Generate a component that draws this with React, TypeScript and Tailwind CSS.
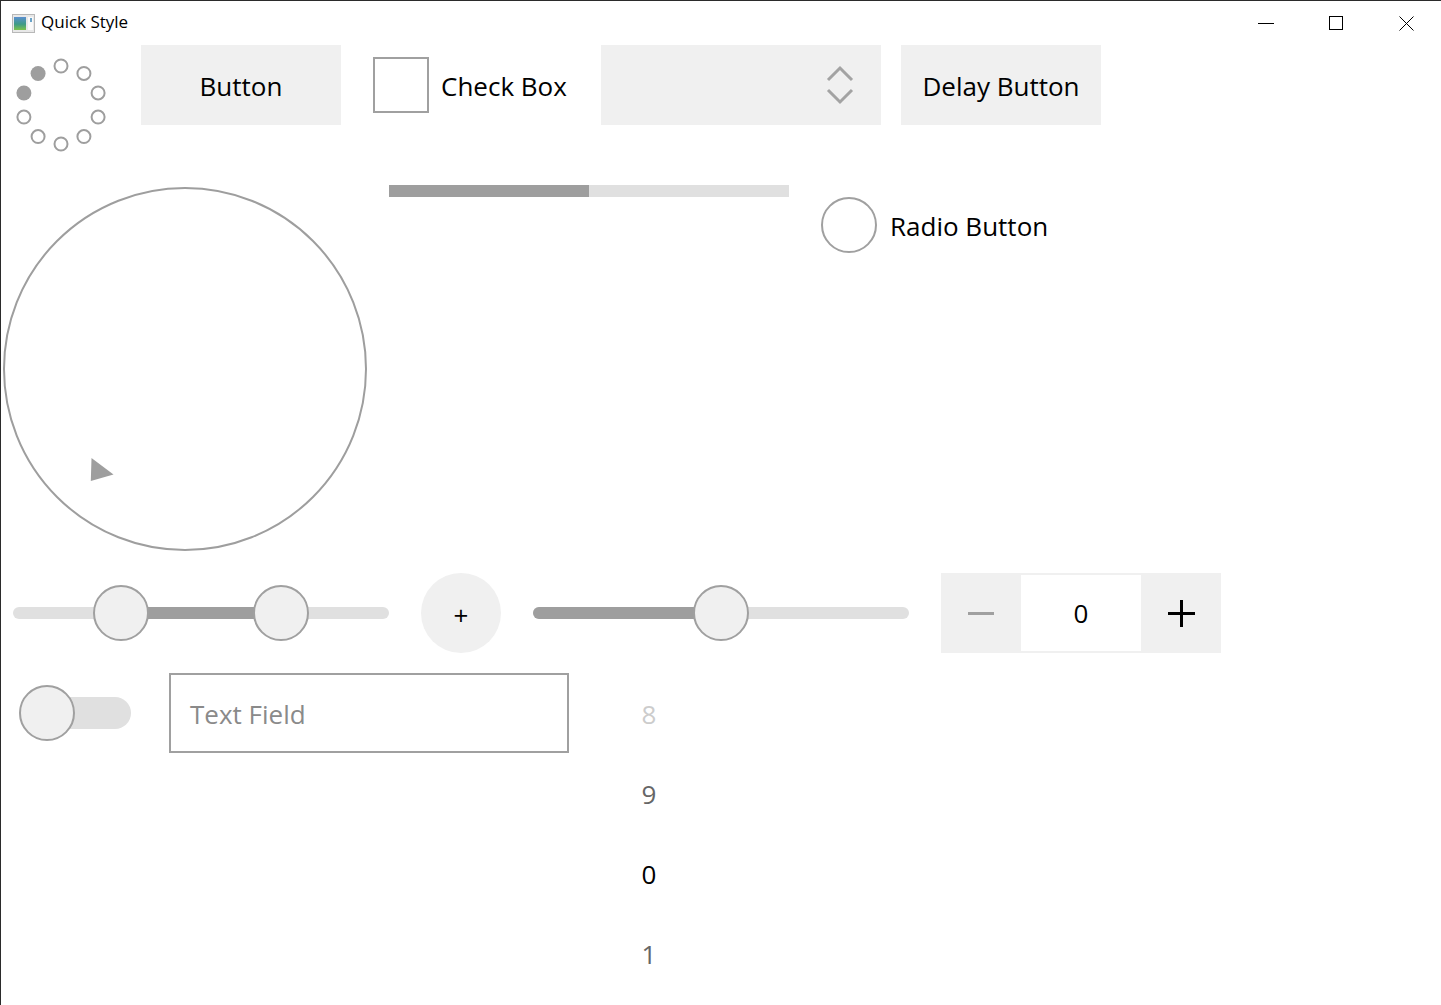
import React from 'react'

const grey = '#9e9e9e'

function AppIcon() {
  return (
    <svg width="23" height="19" viewBox="0 0 23 19">
      <rect x="0.5" y="0.5" width="22" height="18" fill="#e8e8e8" stroke="#b8b8b8" />
      <defs>
        <linearGradient id="ic" x1="0" y1="0" x2="0" y2="1">
          <stop offset="0" stopColor="#5b8fd0" />
          <stop offset="0.55" stopColor="#3f9a86" />
          <stop offset="1" stopColor="#7cc24a" />
        </linearGradient>
      </defs>
      <rect x="2" y="3" width="12" height="13" fill="url(#ic)" />
      <rect x="16" y="3" width="5" height="13" fill="#fafafa" />
      <rect x="18" y="4" width="2" height="4" fill="#6aa3c8" />
    </svg>
  )
}

function TitleBar() {
  return (
    <div className="h-[44px] flex items-center">
      <div className="ml-[11px] mr-[6px] flex items-center">
        <AppIcon />
      </div>
      <span className="text-[17px] text-black leading-none pb-[3px]">Quick Style</span>
      <div className="ml-auto flex h-full">
        <div className="w-[70px] flex items-center justify-center">
          <div className="w-[16px] h-px bg-black" />
        </div>
        <div className="w-[70px] flex items-center justify-center">
          <div className="w-[14px] h-[14px] border border-black" />
        </div>
        <div className="w-[70px] flex items-center justify-center">
          <svg width="15" height="15" viewBox="0 0 15 15">
            <path d="M0.5 0.5 L14.5 14.5 M14.5 0.5 L0.5 14.5" stroke="#000" strokeWidth="1" />
          </svg>
        </div>
      </div>
    </div>
  )
}

function BusyIndicator() {
  const dots = Array.from({ length: 10 }, (_, i) => {
    const a = (i * 36 * Math.PI) / 180
    return { x: 60 + 39 * Math.sin(a), y: 60 - 39 * Math.cos(a), filled: i === 8 || i === 9 }
  })
  return (
    <svg width="120" height="120" viewBox="0 0 120 120" className="shrink-0">
      {dots.map((d, i) =>
        d.filled ? (
          <circle key={i} cx={d.x} cy={d.y} r="7.5" fill={grey} />
        ) : (
          <circle key={i} cx={d.x} cy={d.y} r="6.5" fill="none" stroke={grey} strokeWidth="2" />
        ),
      )}
    </svg>
  )
}

function Dial() {
  return (
    <svg width="368" height="368" viewBox="0 0 368 368" className="shrink-0">
      <circle cx="184" cy="184" r="181" fill="none" stroke={grey} strokeWidth="2" />
      <polygon points="90.5,273 112.5,289.5 89.8,296" fill={grey} />
    </svg>
  )
}

function Thumb({ left }: { left: number }) {
  return (
    <div
      className="absolute top-[12px] w-14 h-14 rounded-full bg-[#f0f0f0] border-2 border-[#a0a0a0]"
      style={{ left }}
    />
  )
}

function RangeSlider() {
  return (
    <div className="relative w-[400px] h-[80px] shrink-0">
      <div className="absolute left-3 right-3 top-[34px] h-3 rounded-full bg-[#e0e0e0]" />
      <div className="absolute left-[120px] w-[160px] top-[34px] h-3 bg-[#9e9e9e]" />
      <Thumb left={92} />
      <Thumb left={252} />
    </div>
  )
}

function Slider() {
  return (
    <div className="relative w-[400px] h-[80px] shrink-0">
      <div className="absolute left-3 right-3 top-[34px] h-3 rounded-full bg-[#e0e0e0]" />
      <div className="absolute left-3 w-[188px] top-[34px] h-3 rounded-l-full bg-[#9e9e9e]" />
      <Thumb left={172} />
    </div>
  )
}

function SpinBox() {
  return (
    <div className="w-[280px] h-[80px] bg-[#f0f0f0] flex shrink-0">
      <div className="w-[80px] flex items-center justify-center">
        <div className="w-[26px] h-[3px] bg-[#a0a0a0]" />
      </div>
      <div className="w-[120px] my-[2px] bg-white flex items-center justify-center pt-[1px] text-[26px] text-black">
        0
      </div>
      <div className="w-[80px] flex items-center justify-center">
        <div className="relative w-[27px] h-[27px] flex items-center justify-center">
          <div className="w-[27px] h-[3px] bg-black" />
          <div className="absolute left-[12px] top-0 w-[3px] h-[27px] bg-black" />
        </div>
      </div>
    </div>
  )
}

function Switch() {
  return (
    <div className="w-[148px] h-[80px] flex items-center pl-[18px] shrink-0">
      <div className="relative w-[112px] h-8 rounded-full bg-[#e0e0e0]">
        <div className="absolute left-0 top-[-12px] w-14 h-14 rounded-full bg-[#f0f0f0] border-2 border-[#a0a0a0]" />
      </div>
    </div>
  )
}

function Tumbler() {
  const items = [
    { v: '8', c: 'text-[#cccccc]' },
    { v: '9', c: 'text-[#666666]' },
    { v: '0', c: 'text-black' },
    { v: '1', c: 'text-[#666666]' },
  ]
  return (
    <div className="w-[120px] flex flex-col shrink-0">
      {items.map((it) => (
        <div key={it.v} className={`h-[80px] flex items-center justify-center pt-[2px] text-[26px] ${it.c}`}>
          {it.v}
        </div>
      ))}
    </div>
  )
}

export default function App() {
  return (
    <div className="w-[1441px] h-[1005px] overflow-hidden bg-white border-l border-t border-[#2b2b2b] font-['Open_Sans',sans-serif] text-black">
      <TitleBar />
      <div className="flex flex-col gap-5">
        <div className="flex gap-5 items-start">
          <BusyIndicator />
          <div className="w-[200px] h-[80px] bg-[#f0f0f0] flex items-center justify-center pt-[3px] text-[26px] shrink-0">
            Button
          </div>
          <div className="w-[220px] h-[80px] flex items-center pl-3 shrink-0">
            <div className="w-14 h-14 border-2 border-[#a0a0a0] bg-white" />
            <span className="ml-3 pt-[3px] text-[26px]">Check Box</span>
          </div>
          <div className="w-[280px] h-[80px] bg-[#f0f0f0] flex items-center justify-end pr-[27px] shrink-0">
            <svg width="28" height="40" viewBox="0 0 28 40">
              <path d="M2 15 L14 3 L26 15 M2 25 L14 37 L26 25" fill="none" stroke="#a3a3a3" strokeWidth="3" />
            </svg>
          </div>
          <div className="w-[200px] h-[80px] bg-[#f0f0f0] flex items-center justify-center pt-[3px] text-[26px] shrink-0">
            Delay Button
          </div>
        </div>
        <div className="flex gap-5 items-start">
          <Dial />
          <div className="w-[400px] h-3 bg-[#e0e0e0] flex shrink-0">
            <div className="w-[200px] h-3 bg-[#9e9e9e]" />
          </div>
          <div className="h-[80px] flex items-center pl-3">
            <div className="w-14 h-14 rounded-full border-2 border-[#a0a0a0] bg-white" />
            <span className="ml-[13px] pt-[3px] text-[26px]">Radio Button</span>
          </div>
        </div>
        <div className="flex gap-5 items-start">
          <RangeSlider />
          <div className="w-[80px] h-[80px] rounded-full bg-[#f0f0f0] flex items-center justify-center pt-[5px] text-[26px] shrink-0">
            +
          </div>
          <Slider />
          <SpinBox />
        </div>
        <div className="flex gap-5 items-start">
          <Switch />
          <div className="w-[400px] h-[80px] border-2 border-[#a0a0a0] flex items-center pl-[19px] pt-[2px] text-[26px] text-[#8a8a8a] shrink-0">
            Text Field
          </div>
          <Tumbler />
        </div>
      </div>
    </div>
  )
}
